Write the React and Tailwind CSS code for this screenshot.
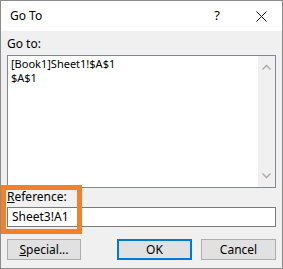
import React from "react";

const font = { fontFamily: '"Segoe UI", "Noto Sans", "Open Sans", sans-serif' };

function Chevron({ up }) {
  return (
    <svg width="9" height="6" viewBox="0 0 9 6" className="block">
      <path
        d={up ? "M0.5 5.5 L4.5 1.5 L8.5 5.5" : "M0.5 0.5 L4.5 4.5 L8.5 0.5"}
        fill="none"
        stroke="#a6a6a6"
        strokeWidth="1.3"
      />
    </svg>
  );
}

export default function App() {
  return (
    <div
      className="relative w-[283px] h-[269px] border border-[#8c8c8c] bg-[#f0f0f0] flex flex-col text-[12px] text-[#000] overflow-hidden"
      style={font}
    >
      {/* title bar */}
      <div className="h-[30px] bg-white flex items-center shrink-0">
        <span className="ml-[9px] text-[12px]">Go To</span>
        <span className="ml-auto mr-[36px] text-[13px]">?</span>
        <svg width="11" height="11" viewBox="0 0 11 11" className="mr-[15px]">
          <path d="M0.5 0.5 L10.5 10.5 M10.5 0.5 L0.5 10.5" stroke="#111" strokeWidth="1" />
        </svg>
      </div>

      <div className="flex flex-col px-[6px] flex-1">
        <div className="h-[24px] flex items-center pt-[2px]">Go to:</div>

        {/* list box */}
        <div className="h-[133px] border border-[#828790] bg-white flex">
          <div className="flex-1 pl-[3px] pt-[1px] text-[11px] leading-[14px]">
            <div>[Book1]Sheet1!$A$1</div>
            <div>$A$1</div>
          </div>
          <div className="w-[17px] bg-[#f0f0f0] flex flex-col items-center justify-between py-[8px]">
            <Chevron up />
            <Chevron />
          </div>
        </div>

        <div className="h-[19px] flex items-end pb-[1px]">
          <span>
            <span className="underline">R</span>eference:
          </span>
        </div>
        <div className="h-[20px] border border-[#7a7a7a] bg-white flex items-center pl-[4px]">
          Sheet3!A1
        </div>

        <div className="flex mt-[12px] h-[21px]">
          <div className="w-[74px] border border-[#adadad] bg-[#e1e1e1] flex items-center justify-center">
            <span>
              <span className="underline">S</span>pecial...
            </span>
          </div>
          <div className="ml-auto w-[75px] border-2 border-[#0078d7] bg-[#e1e1e1] flex items-center justify-center">
            OK
          </div>
          <div className="ml-[9px] w-[75px] border border-[#adadad] bg-[#e1e1e1] flex items-center justify-center">
            Cancel
          </div>
        </div>
      </div>

      {/* highlight annotation */}
      <div className="absolute left-0 top-[184px] w-[81px] h-[49px] border-[5px] border-[#f58025] pointer-events-none" />
    </div>
  );
}
